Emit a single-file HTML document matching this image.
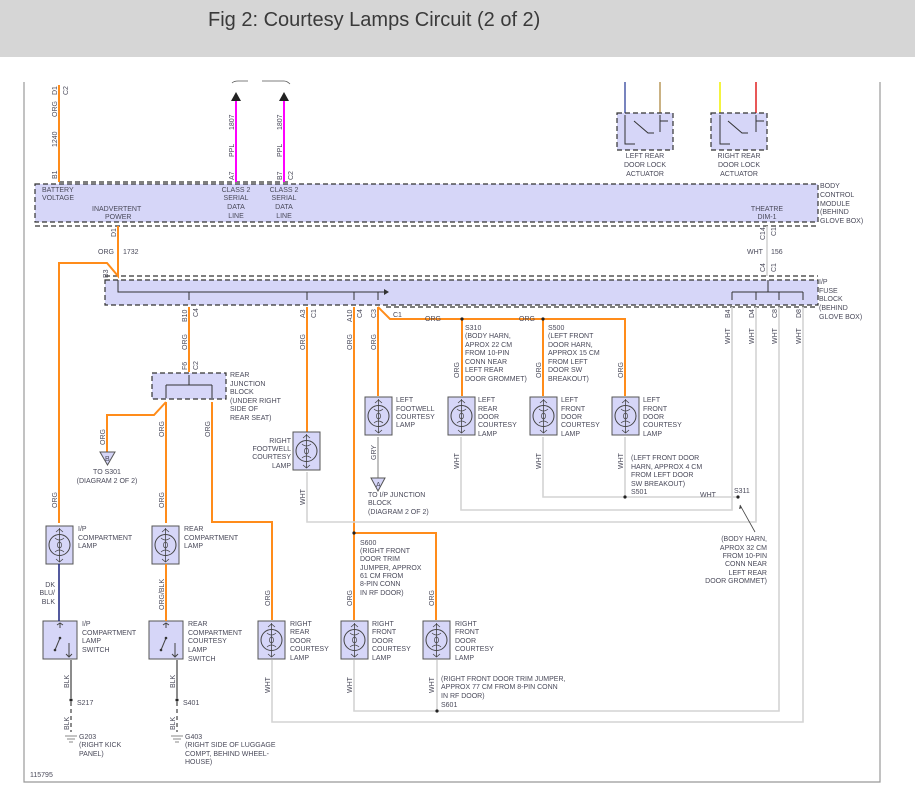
<!DOCTYPE html>
<html><head><meta charset="utf-8"><style>
html,body{margin:0;padding:0;background:#fff;width:915px;height:797px;overflow:hidden}
.hd{position:absolute;left:0;top:0;width:915px;height:57px;background:#d6d6d6}
.hd span{position:absolute;left:208px;top:9px;font:20px "Liberation Sans",sans-serif;color:#3a3a3a}
svg{position:absolute;left:0;top:0}
text{font-family:"Liberation Sans",sans-serif;font-size:7px;fill:#4a4a5a}
.o{stroke:#ff8c1a;stroke-width:2;fill:none}
.w{stroke:#d4d4d4;stroke-width:1.6;fill:none}
.g{stroke:#666;stroke-width:1;fill:none}
.box{fill:#d6d6f8;stroke:#333;stroke-width:1.2;stroke-dasharray:5 3}
.dl{stroke:#333;stroke-width:1.2;stroke-dasharray:5 3;fill:none}
.r{font-size:6.5px}
</style></head><body>
<div class="hd"><span>Fig 2: Courtesy Lamps Circuit (2 of 2)</span></div>
<svg width="915" height="797" viewBox="0 0 915 797">
<defs>
<g id="lamp"><rect x="0" y="0" width="27" height="38" fill="#d6d6f8" stroke="#555" stroke-width="1"/>
<circle cx="13.5" cy="19" r="10.5" fill="none" stroke="#444" stroke-width="1"/>
<ellipse cx="13.5" cy="19" rx="2" ry="3" fill="none" stroke="#444" stroke-width=".7"/>
<path d="M13.5 2V36M10 6l3.5-3 3.5 3M10 33l3.5 3 3.5-3M9 12q4.5 4 9 0M9 26q4.5-4 9 0" stroke="#444" fill="none" stroke-width=".8"/></g>
<g id="sw"><rect x="0" y="0" width="34" height="38" fill="#d6d6f8" stroke="#555" stroke-width="1"/>
<path d="M17 2V7M12 29l5-12M26 22v14M23 33l3 3 3-3M14 4l3-2 3 2" stroke="#444" fill="none" stroke-width="1"/>
<circle cx="17" cy="17" r="1.3" fill="#333"/><circle cx="12" cy="29" r="1.3" fill="#333"/></g>
<g id="hk"><path d="M-4 0q4 -4 8 0" stroke="#555" fill="none" stroke-width=".8"/></g>
</defs>
<!-- frame -->
<path d="M24 82V782H880V82" stroke="#999" stroke-width="1.2" fill="none"/>
<!-- BCM -->
<rect class="box" x="35" y="184" width="783" height="38"/>
<path class="dl" d="M35 226H818"/>
<path class="dl" d="M59 182H290"/>
<!-- fuse block -->
<rect class="box" x="105" y="280" width="713" height="25"/>
<path class="dl" d="M105 276H818M386 307H818"/>
<!-- bus lines -->
<path d="M118 280V292H384M189 292V300M307 292V300M354 292V300M378 292V300M768 280V292M732 292H803M732 292V300M756 292V300M779 292V300M803 292V300" stroke="#333" fill="none" stroke-width="1"/>
<path d="M384 289l5 3-5 3z" fill="#333"/>
<!-- top wires -->
<path class="o" d="M59 85V182"/>
<path d="M236 100V182M284 100V182" stroke="#ff00ff" stroke-width="2"/>
<path d="M231 101l5-9 5 9zM279 101l5-9 5 9z" fill="#222"/>
<path d="M232 83q2-2 6-2h10M262 81h22q3 0 6 3" stroke="#555" fill="none" stroke-width=".8"/>
<!-- door lock actuators -->
<path d="M625 82V113" stroke="#4a5aa8" stroke-width="1.5"/><path d="M660 82V113" stroke="#b8985a" stroke-width="1.5"/>
<path d="M720 82V113" stroke="#f0f000" stroke-width="1.5"/><path d="M756 82V113" stroke="#e02020" stroke-width="1.5"/>
<rect class="box" x="617" y="113" width="56" height="37"/>
<rect class="box" x="711" y="113" width="56" height="37"/>
<path d="M625 115V144H635M634 121l14 12h6M660 115V132M660 121h8" stroke="#333" fill="none" stroke-width="1"/>
<path d="M720 115V144H730M728 121l14 12h6M756 115V132M756 121h8" stroke="#333" fill="none" stroke-width="1"/>
<text x="645" y="158" text-anchor="middle">LEFT REAR</text><text x="645" y="167" text-anchor="middle">DOOR LOCK</text><text x="645" y="176" text-anchor="middle">ACTUATOR</text>
<text x="739" y="158" text-anchor="middle">RIGHT REAR</text><text x="739" y="167" text-anchor="middle">DOOR LOCK</text><text x="739" y="176" text-anchor="middle">ACTUATOR</text>
<!-- inadvertent -->
<path class="o" d="M118 226V276L107 263H59V523"/>
<path class="w" d="M767 226V276"/>
<!-- B10 -->
<path class="o" d="M189 307V372"/>
<rect class="box" x="152" y="373" width="74" height="26"/>
<path d="M189 375V385M166 385H212M166 385V398M212 385V398" stroke="#333" fill="none" stroke-width="1"/>
<path class="o" d="M166 402L154 415H107V452M166 402V523M212 402V522H272V620"/>
<path d="M100 452h15l-7.5 13z" fill="#d6d6f8" stroke="#555"/><text x="105" y="461" font-size="6">B</text>
<!-- A3 A10 C3 -->
<path class="o" d="M307 307V432M354 307V620M354 533H436V620M378 307V396M378 307L390 319H625V396M462 319V396M543 319V396"/>
<circle cx="354" cy="533" r="1.6" fill="#222"/><circle cx="462" cy="319" r="1.6" fill="#222"/><circle cx="543" cy="319" r="1.6" fill="#222"/>
<!-- whites -->
<path class="w" d="M307 472V522H756V307M461 437V510H732V307M543 437V497H738M625 437V497M779 307V711H354V660M437 660V711M803 307V722H272V660"/>
<circle cx="625" cy="497" r="1.6" fill="#222"/><circle cx="738" cy="497" r="1.6" fill="#222"/><circle cx="437" cy="711" r="1.6" fill="#222"/>
<path d="M755 532L740 505" stroke="#444" stroke-width=".8"/><path d="M740 505l-1 4 3-1z" fill="#444"/>
<path d="M378 437V478" stroke="#aaa" stroke-width="1.5"/>
<path d="M371 478h14l-7 13z" fill="#d6d6f8" stroke="#555"/><text x="376" y="487" font-size="6">A</text>
<!-- lamps -->
<use href="#lamp" x="365" y="397"/><use href="#lamp" x="448" y="397"/><use href="#lamp" x="530" y="397"/><use href="#lamp" x="612" y="397"/>
<use href="#lamp" x="293" y="432"/>
<use href="#lamp" x="46" y="526"/><use href="#lamp" x="152" y="526"/>
<use href="#lamp" x="258" y="621"/><use href="#lamp" x="341" y="621"/><use href="#lamp" x="423" y="621"/>
<use href="#sw" x="43" y="621"/><use href="#sw" x="149" y="621"/>
<path d="M59 564V621" stroke="#1a237e" stroke-width="1.5"/>
<path class="o" d="M166 564V621"/>
<path d="M71 660V698" stroke="#666" stroke-width="1.5"/><path d="M71 702V732" stroke="#666" stroke-width="1.5" stroke-dasharray="4 3"/>
<path d="M177 660V698" stroke="#666" stroke-width="1.5"/><path d="M177 702V732" stroke="#666" stroke-width="1.5" stroke-dasharray="4 3"/>
<circle cx="71" cy="700" r="1.6" fill="#222"/><circle cx="177" cy="700" r="1.6" fill="#222"/>
<path d="M65 736h12M67 739h8M69 742h4M171 736h12M173 739h8M175 742h4" stroke="#888"/>
<!-- labels -->
<text x="42" y="192">BATTERY</text><text x="42" y="200">VOLTAGE</text>
<text x="92" y="211">INADVERTENT</text><text x="105" y="219">POWER</text>
<g text-anchor="middle"><text x="236" y="192">CLASS 2</text><text x="236" y="200">SERIAL</text><text x="236" y="209">DATA</text><text x="236" y="218">LINE</text>
<text x="284" y="192">CLASS 2</text><text x="284" y="200">SERIAL</text><text x="284" y="209">DATA</text><text x="284" y="218">LINE</text>
<text x="767" y="211">THEATRE</text><text x="767" y="219">DIM-1</text>
<text x="107" y="474">TO S301</text><text x="107" y="483">(DIAGRAM 2 OF 2)</text></g>
<text x="820" y="188">BODY</text><text x="820" y="197">CONTROL</text><text x="820" y="206">MODULE</text><text x="820" y="214">(BEHIND</text><text x="820" y="223">GLOVE BOX)</text>
<text x="819" y="284">I/P</text><text x="819" y="293">FUSE</text><text x="819" y="301">BLOCK</text><text x="819" y="310">(BEHIND</text><text x="819" y="319">GLOVE BOX)</text>
<text x="98" y="254">ORG</text><text x="123" y="254">1732</text><text x="747" y="254">WHT</text><text x="771" y="254">156</text>
<text x="393" y="317">C1</text><text x="425" y="321">ORG</text><text x="519" y="321">ORG</text>
<text x="465" y="330">S310</text><text x="465" y="338">(BODY HARN,</text><text x="465" y="347">APROX 22 CM</text><text x="465" y="355">FROM 10-PIN</text><text x="465" y="364">CONN NEAR</text><text x="465" y="372">LEFT REAR</text><text x="465" y="381">DOOR GROMMET)</text>
<text x="548" y="330">S500</text><text x="548" y="338">(LEFT FRONT</text><text x="548" y="347">DOOR HARN,</text><text x="548" y="355">APPROX 15 CM</text><text x="548" y="364">FROM LEFT</text><text x="548" y="372">DOOR SW</text><text x="548" y="381">BREAKOUT)</text>
<text x="230" y="377">REAR</text><text x="230" y="386">JUNCTION</text><text x="230" y="394">BLOCK</text><text x="230" y="403">(UNDER RIGHT</text><text x="230" y="411">SIDE OF</text><text x="230" y="420">REAR SEAT)</text>
<text x="396" y="402">LEFT</text><text x="396" y="411">FOOTWELL</text><text x="396" y="419">COURTESY</text><text x="396" y="427">LAMP</text>
<text x="478" y="402">LEFT</text><text x="478" y="411">REAR</text><text x="478" y="419">DOOR</text><text x="478" y="427">COURTESY</text><text x="478" y="436">LAMP</text>
<text x="561" y="402">LEFT</text><text x="561" y="411">FRONT</text><text x="561" y="419">DOOR</text><text x="561" y="427">COURTESY</text><text x="561" y="436">LAMP</text>
<text x="643" y="402">LEFT</text><text x="643" y="411">FRONT</text><text x="643" y="419">DOOR</text><text x="643" y="427">COURTESY</text><text x="643" y="436">LAMP</text>
<g text-anchor="end"><text x="291" y="443">RIGHT</text><text x="291" y="451">FOOTWELL</text><text x="291" y="459">COURTESY</text><text x="291" y="468">LAMP</text>
<text x="55" y="587">DK</text><text x="55" y="595">BLU/</text><text x="55" y="604">BLK</text>
<text x="767" y="541">(BODY HARN,</text><text x="767" y="550">APROX 32 CM</text><text x="767" y="558">FROM 10-PIN</text><text x="767" y="566">CONN NEAR</text><text x="767" y="575">LEFT REAR</text><text x="767" y="583">DOOR GROMMET)</text></g>
<text x="368" y="497">TO I/P JUNCTION</text><text x="368" y="505">BLOCK</text><text x="368" y="514">(DIAGRAM 2 OF 2)</text>
<text x="631" y="460">(LEFT FRONT DOOR</text><text x="631" y="469">HARN, APPROX 4 CM</text><text x="631" y="477">FROM LEFT DOOR</text><text x="631" y="486">SW BREAKOUT)</text><text x="631" y="494">S501</text>
<text x="700" y="497">WHT</text><text x="734" y="493">S311</text>
<text x="360" y="545">S600</text><text x="360" y="553">(RIGHT FRONT</text><text x="360" y="561">DOOR TRIM</text><text x="360" y="570">JUMPER, APPROX</text><text x="360" y="578">61 CM FROM</text><text x="360" y="586">8-PIN CONN</text><text x="360" y="595">IN RF DOOR)</text>
<text x="78" y="531">I/P</text><text x="78" y="540">COMPARTMENT</text><text x="78" y="548">LAMP</text>
<text x="184" y="531">REAR</text><text x="184" y="540">COMPARTMENT</text><text x="184" y="548">LAMP</text>
<text x="82" y="626">I/P</text><text x="82" y="635">COMPARTMENT</text><text x="82" y="643">LAMP</text><text x="82" y="652">SWITCH</text>
<text x="188" y="626">REAR</text><text x="188" y="635">COMPARTMENT</text><text x="188" y="643">COURTESY</text><text x="188" y="652">LAMP</text><text x="188" y="661">SWITCH</text>
<text x="290" y="626">RIGHT</text><text x="290" y="634">REAR</text><text x="290" y="643">DOOR</text><text x="290" y="651">COURTESY</text><text x="290" y="660">LAMP</text>
<text x="372" y="626">RIGHT</text><text x="372" y="634">FRONT</text><text x="372" y="643">DOOR</text><text x="372" y="651">COURTESY</text><text x="372" y="660">LAMP</text>
<text x="455" y="626">RIGHT</text><text x="455" y="634">FRONT</text><text x="455" y="643">DOOR</text><text x="455" y="651">COURTESY</text><text x="455" y="660">LAMP</text>
<text x="441" y="681">(RIGHT FRONT DOOR TRIM JUMPER,</text><text x="441" y="689">APPROX 77 CM FROM 8-PIN CONN</text><text x="441" y="698">IN RF DOOR)</text><text x="441" y="707">S601</text>
<text x="77" y="705">S217</text><text x="183" y="705">S401</text>
<text x="79" y="739">G203</text><text x="79" y="747">(RIGHT KICK</text><text x="79" y="756">PANEL)</text>
<text x="185" y="739">G403</text><text x="185" y="747">(RIGHT SIDE OF LUGGAGE</text><text x="185" y="756">COMPT, BEHIND WHEEL-</text><text x="185" y="764">HOUSE)</text>
<text x="30" y="777" font-size="6.5">115795</text>
<!-- rotated wire labels -->
<g class="r">
<text transform="translate(57,117) rotate(-90)">ORG</text><text transform="translate(57,147) rotate(-90)">1240</text><text transform="translate(57,179) rotate(-90)">B1</text><text transform="translate(57,95) rotate(-90)">D1</text><text transform="translate(68,95) rotate(-90)">C2</text>
<text transform="translate(234,130) rotate(-90)">1807</text><text transform="translate(234,157) rotate(-90)">PPL</text><text transform="translate(234,180) rotate(-90)">A7</text>
<text transform="translate(282,130) rotate(-90)">1807</text><text transform="translate(282,157) rotate(-90)">PPL</text><text transform="translate(282,180) rotate(-90)">B7</text><text transform="translate(293,180) rotate(-90)">C2</text>
<text transform="translate(116,237) rotate(-90)">D1</text><text transform="translate(108,278) rotate(-90)">B3</text>
<text transform="translate(765,240) rotate(-90)">C14</text><text transform="translate(776,236) rotate(-90)">C1</text><text transform="translate(765,272) rotate(-90)">C4</text><text transform="translate(776,272) rotate(-90)">C1</text>
<text transform="translate(187,322) rotate(-90)">B10</text><text transform="translate(198,317) rotate(-90)">C4</text><text transform="translate(187,350) rotate(-90)">ORG</text><text transform="translate(187,370) rotate(-90)">F6</text><text transform="translate(198,370) rotate(-90)">C2</text>
<text transform="translate(305,318) rotate(-90)">A3</text><text transform="translate(316,318) rotate(-90)">C1</text><text transform="translate(305,350) rotate(-90)">ORG</text>
<text transform="translate(352,322) rotate(-90)">A10</text><text transform="translate(362,318) rotate(-90)">C4</text><text transform="translate(352,350) rotate(-90)">ORG</text>
<text transform="translate(376,318) rotate(-90)">C3</text><text transform="translate(376,350) rotate(-90)">ORG</text>
<text transform="translate(459,378) rotate(-90)">ORG</text><text transform="translate(541,378) rotate(-90)">ORG</text><text transform="translate(623,378) rotate(-90)">ORG</text>
<text transform="translate(376,460) rotate(-90)">GRY</text><text transform="translate(459,469) rotate(-90)">WHT</text><text transform="translate(541,469) rotate(-90)">WHT</text><text transform="translate(623,469) rotate(-90)">WHT</text>
<text transform="translate(305,505) rotate(-90)">WHT</text>
<text transform="translate(730,344) rotate(-90)">WHT</text><text transform="translate(754,344) rotate(-90)">WHT</text><text transform="translate(777,344) rotate(-90)">WHT</text><text transform="translate(801,344) rotate(-90)">WHT</text>
<text transform="translate(730,318) rotate(-90)">B4</text><text transform="translate(754,318) rotate(-90)">D4</text><text transform="translate(777,318) rotate(-90)">C8</text><text transform="translate(801,318) rotate(-90)">D8</text>
<text transform="translate(105,445) rotate(-90)">ORG</text><text transform="translate(164,437) rotate(-90)">ORG</text><text transform="translate(210,437) rotate(-90)">ORG</text>
<text transform="translate(57,508) rotate(-90)">ORG</text><text transform="translate(164,508) rotate(-90)">ORG</text>
<text transform="translate(164,610) rotate(-90)">ORG/BLK</text>
<text transform="translate(270,606) rotate(-90)">ORG</text><text transform="translate(352,606) rotate(-90)">ORG</text><text transform="translate(434,606) rotate(-90)">ORG</text>
<text transform="translate(270,693) rotate(-90)">WHT</text><text transform="translate(352,693) rotate(-90)">WHT</text><text transform="translate(434,693) rotate(-90)">WHT</text>
<text transform="translate(69,688) rotate(-90)">BLK</text><text transform="translate(175,688) rotate(-90)">BLK</text>
<text transform="translate(69,730) rotate(-90)">BLK</text><text transform="translate(175,730) rotate(-90)">BLK</text>
</g>
</svg>
</body></html>
